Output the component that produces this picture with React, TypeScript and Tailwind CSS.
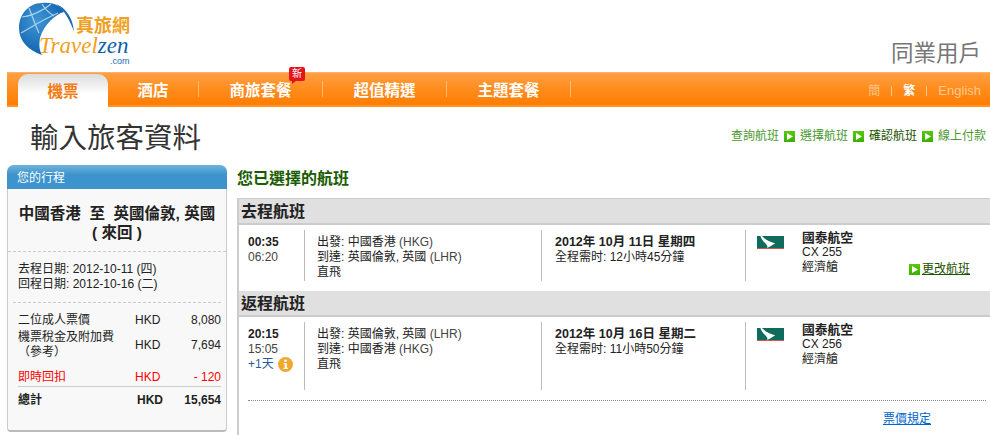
const navItems = [
  { label: "酒店", width: "w-[91px]" },
  { label: "商旅套餐", width: "w-[124px]" },
  { label: "超值精選", width: "w-[124px]" },
  { label: "主題套餐", width: "w-[124px]" },
];

const trips = [
  {
    title: "去程航班",
    depart: "00:35",
    arrive: "06:20",
    from: "中國香港",
    fromCode: "(HKG)",
    to: "英國倫敦, 英國",
    toCode: "(LHR)",
    date: "2012年 10月 11日 星期四",
    duration: "全程需时: 12小時45分鐘",
    flight: "CX 255",
  },
  {
    title: "返程航班",
    depart: "20:15",
    arrive: "15:05",
    from: "英國倫敦, 英國",
    fromCode: "(LHR)",
    to: "中國香港",
    toCode: "(HKG)",
    date: "2012年 10月 16日 星期二",
    duration: "全程需时: 11小時50分鐘",
    flight: "CX 256",
    nextDay: true,
  },
];

function Logo() {
  return (
    <div className="relative w-[130px] h-[66px]">
      <svg width="80" height="60" viewBox="0 0 80 60" className="absolute left-[15px] top-0">
        <defs>
          <radialGradient id="globe" cx="40%" cy="35%" r="75%">
            <stop offset="0%" stopColor="#3f97d6" />
            <stop offset="100%" stopColor="#0b5aa6" />
          </radialGradient>
        </defs>
        <path d="M24 3C34 2 42 5 46 12C38 14 26 24 22 38C21 44 21 50 24 55C10 50 1 41 1 28C1 14 11 3 24 3Z" fill="url(#globe)" />
        <path d="M38 4C48 8 55 18 56 32C52 20 46 10 38 4Z" fill="#1a6cb3" />
        <path d="M4 17C14 16 26 10 33 4M3 33C12 28 24 20 40 13M11 8C14 16 17 24 21 33M24 4C27 9 31 13 36 16" stroke="#a9d2ee" strokeWidth="1.2" fill="none" />
      </svg>
      <span className="absolute left-[73px] top-[17px] text-[18px] leading-[18px] font-bold text-[#f0a020]">真旅網</span>
      <span className="absolute left-[36px] top-[36px] text-[23px] leading-[20px] italic [font-family:'Liberation_Serif',serif] text-[#f0a020] whitespace-nowrap">
        Travel<span className="text-[#0f5fa8]">zen</span>
      </span>
      <span className="absolute left-[107px] top-[57px] text-[9px] leading-[9px] text-[#1a6cb3]">.com</span>
    </div>
  );
}

function NavBar() {
  return (
    <div className="ml-[7px] h-[35px] flex items-stretch border-t border-[#ffb070] bg-gradient-to-b from-[#ffa040] via-[#ff8c1c] to-[#ff7d00] border-b-2 border-b-[#ff9428]">
      <div className="ml-[11px] mt-[1px] -mb-[2px] pt-[3px] w-[90px] rounded-t-[10px] bg-gradient-to-b from-[#dcdcdc] to-white to-60% flex items-center justify-center text-[15.5px] font-bold text-[#f57a10]">
        機票
      </div>
      <div className="flex items-center">
        {navItems.map((item, i) => (
          <div
            key={item.label}
            className={`relative ${item.width} h-[16px] flex items-center justify-center border-r border-[#ffb974] text-[15.5px] font-bold text-white`}
          >
            <span className="pt-[3px]">{item.label}</span>
            {i === 1 && (
              <span className="absolute left-[90px] -top-[14px] w-[16px] h-[14px] rounded-[2px] bg-[#e4141c] text-[10px] leading-[14px] text-center font-normal text-white">
                新
                <span className="absolute left-[3px] top-[14px] border-t-[3px] border-r-[4px] border-t-[#e4141c] border-r-transparent" />
              </span>
            )}
          </div>
        ))}
      </div>
      <div className="ml-auto mr-[9px] pt-[3px] flex items-center text-[13px] text-[#ffc890]">
        <span className="text-[12px]">簡</span>
        <span className="mx-[11px] w-px h-[10px] bg-[#ffc890]" />
        <span className="text-[12px] text-white font-bold">繁</span>
        <span className="mx-[11px] w-px h-[10px] bg-[#ffc890]" />
        <span>English</span>
      </div>
    </div>
  );
}

function PlayIcon() {
  return (
    <svg width="11" height="11" viewBox="0 0 11 11" className="shrink-0">
      <defs>
        <linearGradient id="playGreen" x1="0" y1="0" x2="0" y2="1">
          <stop offset="0%" stopColor="#5cc80a" />
          <stop offset="100%" stopColor="#38b000" />
        </linearGradient>
      </defs>
      <rect width="11" height="11" fill="url(#playGreen)" />
      <path d="M3 2L9 5.5L3 9Z" fill="white" />
    </svg>
  );
}

function Breadcrumb() {
  const steps = ["查詢航班", "選擇航班", "確認航班", "線上付款"];
  return (
    <div className="mr-[4px] flex items-center gap-[5px] text-[12px] text-[#4a9a2e]">
      {steps.map((step, i) => (
        <div key={step} className="flex items-center gap-[5px]">
          {i > 0 && <PlayIcon />}
          <span className={i === 2 ? "text-[#1a5200]" : ""}>{step}</span>
        </div>
      ))}
    </div>
  );
}

function PriceRow({ label, amount, className = "" }: { label: React.ReactNode; amount: string; className?: string }) {
  return (
    <div className={`grid grid-cols-[117px_40px_1fr] items-center ${className}`}>
      <div>{label}</div>
      <div>HKD</div>
      <div className="text-right">{amount}</div>
    </div>
  );
}

function Sidebar() {
  return (
    <aside className="w-[220px] h-[267px] shrink-0 rounded-t-[7px] rounded-b-[4px] border-x border-[#ccc] border-b-2 border-b-[#bbb] bg-[#f8f8f8] text-[12px] leading-[15px] text-[#222]">
      <div className="-mx-px h-[24px] rounded-t-[7px] bg-gradient-to-b from-[#6fb3dd] to-[#3d94cc] to-40% pl-[10px] pt-[3px] flex items-center text-white">
        您的行程
      </div>
      <div className="mx-[5px]">
        <div className="pt-[15px] pb-[9px] -mx-[5px] border-b border-dashed border-[#ccc] text-center text-[15.5px] leading-[19px] font-bold text-[#222] whitespace-nowrap">
          中國香港&nbsp; 至&nbsp; 英國倫敦, 英國
          <br />( 來回 )
        </div>
        <div className="pl-[5px] pt-[10px] pb-[10px] border-b border-dashed border-[#ccc]">
          <div>去程日期: 2012-10-11 (四)</div>
          <div>回程日期: 2012-10-16 (二)</div>
        </div>
        <div className="pl-[5px] pt-[10px]">
          <PriceRow label="二位成人票價" amount="8,080" />
          <PriceRow
            label={
              <>
                機票稅金及附加費
                <br />
                （參考）
              </>
            }
            amount="7,694"
            className="mt-[2px]"
          />
          <PriceRow label="即時回扣" amount="- 120" className="mt-[10px] text-[#ff0000]" />
        </div>
        <div className="ml-[5px] mt-[1px] pt-[6px] border-t border-[#ccc]">
          <PriceRow label="總計" amount="15,654" className="font-bold text-[#222] [&>div:nth-child(2)]:pl-[2px]" />
        </div>
      </div>
    </aside>
  );
}

function CathayLogo() {
  return (
    <svg width="28" height="17" viewBox="0 0 28 17" className="shrink-0">
      <rect x="0" y="3" width="27" height="13" fill="#0f6b5c" />
      <rect x="0" y="15" width="27" height="1" fill="#d9534f" />
      <path d="M3 0C5 4 9 7 14 9C18 10 19 11 17 11C15 12 13 14 10 15C11 13 10 12 8 10C6 8 3 5 3 0Z" fill="white" />
    </svg>
  );
}

function InfoIcon() {
  return (
    <svg width="15" height="15" viewBox="0 0 15 15">
      <circle cx="7.5" cy="7.5" r="7.5" fill="#f0a830" />
      <circle cx="7.5" cy="3.8" r="1.4" fill="white" />
      <path d="M5.5 6H8.8V10.8H10V12H5.5V10.8H6.7V7.2H5.5Z" fill="white" />
    </svg>
  );
}

function Trip({ trip, last }: { trip: (typeof trips)[number]; last?: boolean }) {
  const divider = last ? "h-[68px]" : "h-[51px]";
  return (
    <>
      <h3 className="h-[26px] pl-[2px] flex items-center bg-[#e0e0e0] border-b-2 border-[#ccc] text-[16px] font-bold text-[#222]">
        {trip.title}
      </h3>
      <div className={`relative flex pl-[9px] pt-[5px] ${last ? "" : "h-[66px]"}`}>
        <div className={`w-[57px] shrink-0 border-r border-[#bbb] pt-[5px] ${divider}`}>
          <div className="font-bold">{trip.depart}</div>
          <div className="text-[#444]">{trip.arrive}</div>
          {trip.nextDay && (
            <div className="flex items-center gap-[4px] text-[#2a5a9a]">
              +1天 <InfoIcon />
            </div>
          )}
        </div>
        <div className={`w-[237px] shrink-0 border-r border-[#bbb] pl-[12px] pt-[5px] ${divider}`}>
          <div>
            出發: {trip.from} <span className="text-[#444]">{trip.fromCode}</span>
          </div>
          <div>
            到達: {trip.to} <span className="text-[#444]">{trip.toCode}</span>
          </div>
          <div>直飛</div>
        </div>
        <div className={`w-[204px] shrink-0 border-r border-[#bbb] pl-[13px] pt-[5px] ${divider}`}>
          <div className="text-[12.5px] font-bold">{trip.date}</div>
          <div>{trip.duration}</div>
        </div>
        <div className="pl-[11px] pt-[3px]">
          <CathayLogo />
        </div>
        <div className="pl-[17px]">
          <div className="text-[12.75px] font-bold">國泰航空</div>
          <div>{trip.flight}</div>
          <div>經濟艙</div>
        </div>
        {!last && (
          <a className="absolute left-[670px] top-[37px] flex items-center gap-[2px] text-[#1a5200] underline">
            <PlayIcon />
            更改航班
          </a>
        )}
      </div>
    </>
  );
}

export default function App() {
  return (
    <div className="w-[990px] h-[435px] overflow-hidden bg-white [font-family:'Liberation_Sans','Noto_Sans_CJK_TC',sans-serif]">
      <header className="h-[72px] flex justify-between">
        <div className="pl-[3px]">
          <Logo />
        </div>
        <div className="mr-[9px] mt-[40px] text-[22.5px] leading-[28px] text-[#777]">同業用戶</div>
      </header>
      <NavBar />
      <div className="h-[58px] pl-[30px] flex items-center justify-between">
        <h1 className="pt-[4px] text-[28.5px] leading-[36px] text-[#333]">輸入旅客資料</h1>
        <Breadcrumb />
      </div>
      <div className="flex pl-[7px] gap-[10px]">
        <Sidebar />
        <main className="flex-1 min-w-0">
          <h2 className="h-[33px] pt-[5px] text-[16px] leading-[18px] font-bold text-[#1a5c00]">您已選擇的航班</h2>
          <div className="h-[240px] border-l-2 border-t border-[#ccc] text-[12px] leading-[15px] text-[#222]">
            {trips.map((trip, i) => (
              <Trip key={trip.title} trip={trip} last={i === 1} />
            ))}
            <div className="ml-[9px] mr-[4px] mt-[10px] border-t border-dotted border-[#888]" />
            <div className="mt-[11px] mr-[59px] text-right">
              <a className="text-[#0066cc] underline">票價規定</a>
            </div>
          </div>
        </main>
      </div>
    </div>
  );
}
